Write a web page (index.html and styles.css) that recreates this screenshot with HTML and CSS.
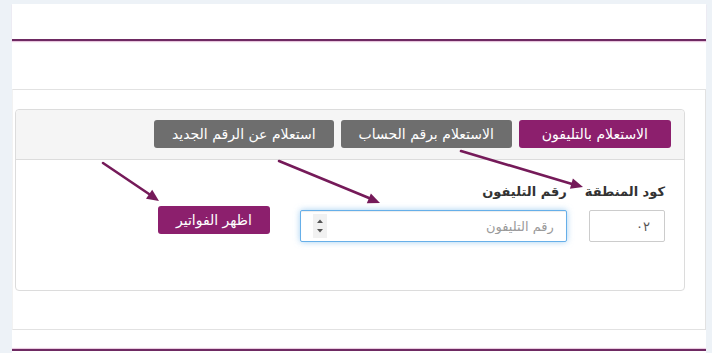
FILE: index.html
```html
<!DOCTYPE html>
<html lang="ar" dir="rtl">
<head>
    <meta charset="UTF-8">
    <meta name="viewport" content="width=device-width, initial-scale=1.0">
    <title>الاستعلام عن الفواتير</title>
    <link rel="stylesheet" href="styles.css">
</head>
<body>
    <div class="page">
        <div class="top-bar"></div>

        <div class="outer-box">
            <div class="panel">
                <div class="panel-head">
                    <button class="btn btn-purple btn-wide">الاستعلام بالتليفون</button>
                    <button class="btn btn-gray">الاستعلام برقم الحساب</button>
                    <button class="btn btn-gray">استعلام عن الرقم الجديد</button>
                </div>
                <form class="panel-body">
                    <div class="group">
                        <label>كود المنطقة</label>
                        <input type="text" class="field code" value="٠٢">
                    </div>
                    <div class="group">
                        <label>رقم التليفون</label>
                        <div class="phone-wrap">
                            <input type="text" class="field phone" placeholder="رقم التليفون">
                            <!-- fake number spinner -->
                            <span class="spinner">
                                <svg width="14" height="24" viewBox="0 0 14 24">
                                    <path d="M4 9 L7 5.5 L10 9 Z" fill="#555"/>
                                    <path d="M4 15 L7 18.5 L10 15 Z" fill="#555"/>
                                </svg>
                            </span>
                        </div>
                    </div>
                    <div class="group group-btn">
                        <button type="button" class="btn btn-purple">اظهر الفواتير</button>
                    </div>
                </form>
            </div>
        </div>

        <div class="bottom-bar"></div>
    </div>

    <!-- annotation arrows drawn over the screenshot -->
    <svg class="arrows" width="712" height="353" viewBox="0 0 712 353">
        <g stroke="#751a59" stroke-width="2.6" stroke-linecap="round" fill="none">
            <line x1="461" y1="151" x2="572" y2="184"/>
            <line x1="279" y1="161" x2="369" y2="198"/>
            <line x1="103" y1="163" x2="149" y2="194"/>
        </g>
        <g fill="#751a59">
            <polygon points="583,187 572.9,178.4 569.9,188.8"/>
            <polygon points="380,203 370.9,193.4 366.8,203.2"/>
            <polygon points="159,201 152.2,189.8 146,198.8"/>
        </g>
    </svg>
</body>
</html>
```

FILE: styles.css
```css
body {
    margin: 0;
    background-color: #edf2f7;
    font-family: "DejaVu Sans", "Noto Sans", sans-serif;
    font-size: 13px;
    color: #333;
    height: 353px;
    overflow: hidden;
}
.page {
    margin: 4px 6px 0 12px;
    height: 349px;
    background-color: #fff;
}
.top-bar {
    height: 35px;
    border-bottom: 2px solid #6e2a62;
    box-shadow: 0 1px 1px #e8c6de;
}
.outer-box {
    margin-top: 48px;
    border: 1px solid #e2e2e2;
    border-left-color: #f2f2f2;
    padding: 19px 20px 38px 2px;
}
.panel {
    border: 1px solid #dcdcdc;
    border-radius: 4px;
    height: 180px;
}
.panel-head {
    display: flex;
    gap: 7px;
    padding: 10px 13px 11px;
    background-color: #f5f5f5;
    border-bottom: 1px solid #dcdcdc;
    border-radius: 4px 4px 0 0;
}
.btn {
    height: 28px;
    padding: 0 18px;
    border: none;
    border-radius: 3px;
    font-family: inherit;
    font-size: 14px;
    color: #fff;
    cursor: pointer;
}
.btn-wide {
    padding: 0 23px;
}
.btn-purple {
    background-color: #8c1f6d;
}
.btn-gray {
    background-color: #6e6e6e;
}
.panel-body {
    display: flex;
    align-items: flex-end;
    padding: 23px 19px 0;
}
.group {
    display: flex;
    flex-direction: column;
    margin-left: 18px;
}
.group label {
    font-weight: bold;
    font-size: 13px;
    line-height: 18px;
    margin-bottom: 9px;
    white-space: nowrap;
}
.group-btn {
    margin-left: 0;
    margin-right: 12px;
    padding-bottom: 8px;
}
.field {
    box-sizing: border-box;
    height: 32px;
    border: 1px solid #ccc;
    border-radius: 2px;
    padding: 0 12px;
    font-family: inherit;
    font-size: 13px;
    color: #555;
    background: #fff;
    outline: none;
}
.field::placeholder {
    color: #9a9a9a;
}
.code {
    width: 76px;
    padding-right: 14px;
}
.phone-wrap {
    position: relative;
}
.phone {
    width: 267px;
    border-color: #66afe9;
    box-shadow: inset 0 1px 1px rgba(0,0,0,.075), 0 0 6px rgba(102,175,233,.6);
}
.spinner {
    position: absolute;
    left: 13px;
    top: 4px;
    width: 14px;
    height: 24px;
    background-color: #f1f1f1;
}
.spinner svg {
    display: block;
}
.bottom-bar {
    margin-top: 19px;
    border-top: 2px solid #6e2a62;
    box-shadow: 0 -1px 1px #e8c6de;
}
.arrows {
    position: absolute;
    top: 0;
    left: 0;
    pointer-events: none;
}
```
